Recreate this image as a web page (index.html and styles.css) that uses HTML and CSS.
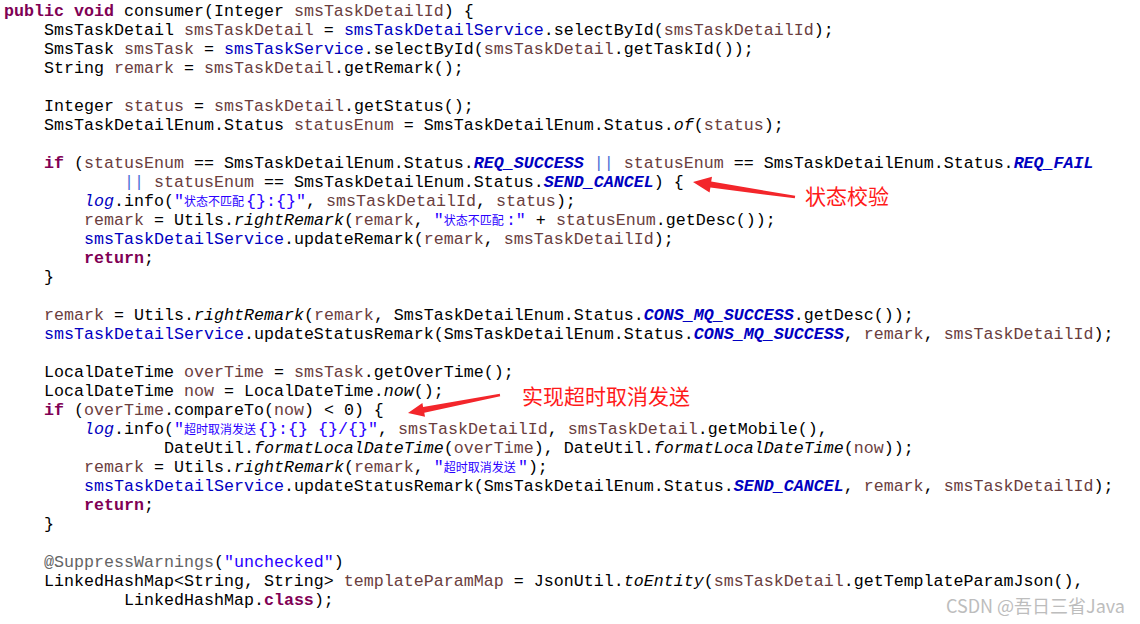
FILE: index.html
```html
<!DOCTYPE html>
<html lang="zh-CN">
<head>
  <meta charset="UTF-8" />
  <title>consumer</title>
  <link rel="stylesheet" href="styles.css">
</head>
<body>

<div class="shot">
<pre class="code"><span class="kw">public</span> <span class="kw">void</span> consumer(Integer <span class="lv">smsTaskDetailId</span>) {
    SmsTaskDetail <span class="lv">smsTaskDetail</span> = <span class="fd">smsTaskDetailService</span>.selectById(<span class="lv">smsTaskDetailId</span>);
    SmsTask <span class="lv">smsTask</span> = <span class="fd">smsTaskService</span>.selectById(<span class="lv">smsTaskDetail</span>.getTaskId());
    String <span class="lv">remark</span> = <span class="lv">smsTaskDetail</span>.getRemark();

    Integer <span class="lv">status</span> = <span class="lv">smsTaskDetail</span>.getStatus();
    SmsTaskDetailEnum.Status <span class="lv">statusEnum</span> = SmsTaskDetailEnum.Status.<span class="sm">of</span>(<span class="lv">status</span>);

    <span class="kw">if</span> (<span class="lv">statusEnum</span> == SmsTaskDetailEnum.Status.<span class="sf">REQ_SUCCESS</span> <span class="op">||</span> <span class="lv">statusEnum</span> == SmsTaskDetailEnum.Status.<span class="sf">REQ_FAIL</span>
            <span class="op">||</span> <span class="lv">statusEnum</span> == SmsTaskDetailEnum.Status.<span class="sf">SEND_CANCEL</span>) {
        <span class="lg">log</span>.info(<span class="st">"<span class="cjk">状态不匹配</span>{}:{}"</span>, <span class="lv">smsTaskDetailId</span>, <span class="lv">status</span>);
        <span class="lv">remark</span> = Utils.<span class="sm">rightRemark</span>(<span class="lv">remark</span>, <span class="st">"<span class="cjk">状态不匹配</span>:"</span> + <span class="lv">statusEnum</span>.getDesc());
        <span class="fd">smsTaskDetailService</span>.updateRemark(<span class="lv">remark</span>, <span class="lv">smsTaskDetailId</span>);
        <span class="kw">return</span>;
    }

    <span class="lv">remark</span> = Utils.<span class="sm">rightRemark</span>(<span class="lv">remark</span>, SmsTaskDetailEnum.Status.<span class="sf">CONS_MQ_SUCCESS</span>.getDesc());
    <span class="fd">smsTaskDetailService</span>.updateStatusRemark(SmsTaskDetailEnum.Status.<span class="sf">CONS_MQ_SUCCESS</span>, <span class="lv">remark</span>, <span class="lv">smsTaskDetailId</span>);

    LocalDateTime <span class="lv">overTime</span> = <span class="lv">smsTask</span>.getOverTime();
    LocalDateTime <span class="lv">now</span> = LocalDateTime.<span class="sm">now</span>();
    <span class="kw">if</span> (<span class="lv">overTime</span>.compareTo(<span class="lv">now</span>) &lt; 0) {
        <span class="lg">log</span>.info(<span class="st">"<span class="cjk">超时取消发送</span>{}:{} {}/{}"</span>, <span class="lv">smsTaskDetailId</span>, <span class="lv">smsTaskDetail</span>.getMobile(),
                DateUtil.<span class="sm">formatLocalDateTime</span>(<span class="lv">overTime</span>), DateUtil.<span class="sm">formatLocalDateTime</span>(<span class="lv">now</span>));
        <span class="lv">remark</span> = Utils.<span class="sm">rightRemark</span>(<span class="lv">remark</span>, <span class="st">"<span class="cjk">超时取消发送</span>"</span>);
        <span class="fd">smsTaskDetailService</span>.updateStatusRemark(SmsTaskDetailEnum.Status.<span class="sf">SEND_CANCEL</span>, <span class="lv">remark</span>, <span class="lv">smsTaskDetailId</span>);
        <span class="kw">return</span>;
    }

    <span class="an">@SuppressWarnings</span>(<span class="st">"unchecked"</span>)
    LinkedHashMap&lt;String, String&gt; <span class="lv">templateParamMap</span> = JsonUtil.<span class="sm">toEntity</span>(<span class="lv">smsTaskDetail</span>.getTemplateParamJson(),
            LinkedHashMap.<span class="kw">class</span>);</pre>

  <!-- 标注箭头 -->
  <svg class="arrows" width="1140" height="624" viewBox="0 0 1140 624">
    <polygon points="693,182 712,176.7 711.2,181.6 795.2,195.7 794.8,198.3 710.4,187.6 709.6,192.5" />
    <polygon points="408,413 422.4,403 423.1,407 499.8,393.8 500.2,396.2 424.3,412.8 425,416.8" />
  </svg>
  <span class="note note-check">状态校验</span>
  <span class="note note-timeout">实现超时取消发送</span>

  <span class="watermark">CSDN @吾日三省Java</span>
</div>

</body>
</html>
```

FILE: styles.css
```css
html, body {
  margin: 0;
  padding: 0;
  background: #ffffff;
}

.shot {
  position: relative;
  width: 1140px;
  height: 624px;
  overflow: hidden;
}

.code {
  margin: 0;
  padding: 2px 0 0 4px;
  font-family: "Liberation Mono", "Courier New", monospace;
  font-size: 16.67px;
  line-height: 19px;
  color: #000000;
}

/* 语法高亮 (Eclipse 风格) */
.kw {
  color: #7f0055;
  font-weight: bold;
}

.lv {
  color: #6a3e3e;
}

.fd {
  color: #0000c0;
}

.lg {
  color: #0000c0;
  font-style: italic;
}

.sf {
  color: #0000c0;
  font-style: italic;
  font-weight: bold;
}

.sm {
  font-style: italic;
}

.st {
  color: #2a00ff;
}

.an {
  color: #646464;
}

.op {
  color: #4a6fd6;
}

.cjk {
  font-family: "Noto Sans CJK SC", sans-serif;
  font-size: 12px;
  line-height: 12px;
  margin-right: 2px;
}

.arrows {
  position: absolute;
  top: 0;
  left: 0;
  pointer-events: none;
}

.arrows polygon {
  fill: #f3262b;
}

.note {
  position: absolute;
  font-family: "Noto Sans CJK SC", sans-serif;
  font-size: 21px;
  line-height: 21px;
  color: #ff1a1a;
  white-space: nowrap;
}

.note-check {
  left: 805px;
  top: 185px;
}

.note-timeout {
  left: 522px;
  top: 385px;
}

.watermark {
  position: absolute;
  right: 15px;
  top: 595px;
  font-family: "Noto Sans CJK SC", sans-serif;
  font-size: 18px;
  line-height: 20px;
  color: #bdbdbd;
  white-space: nowrap;
}
```
